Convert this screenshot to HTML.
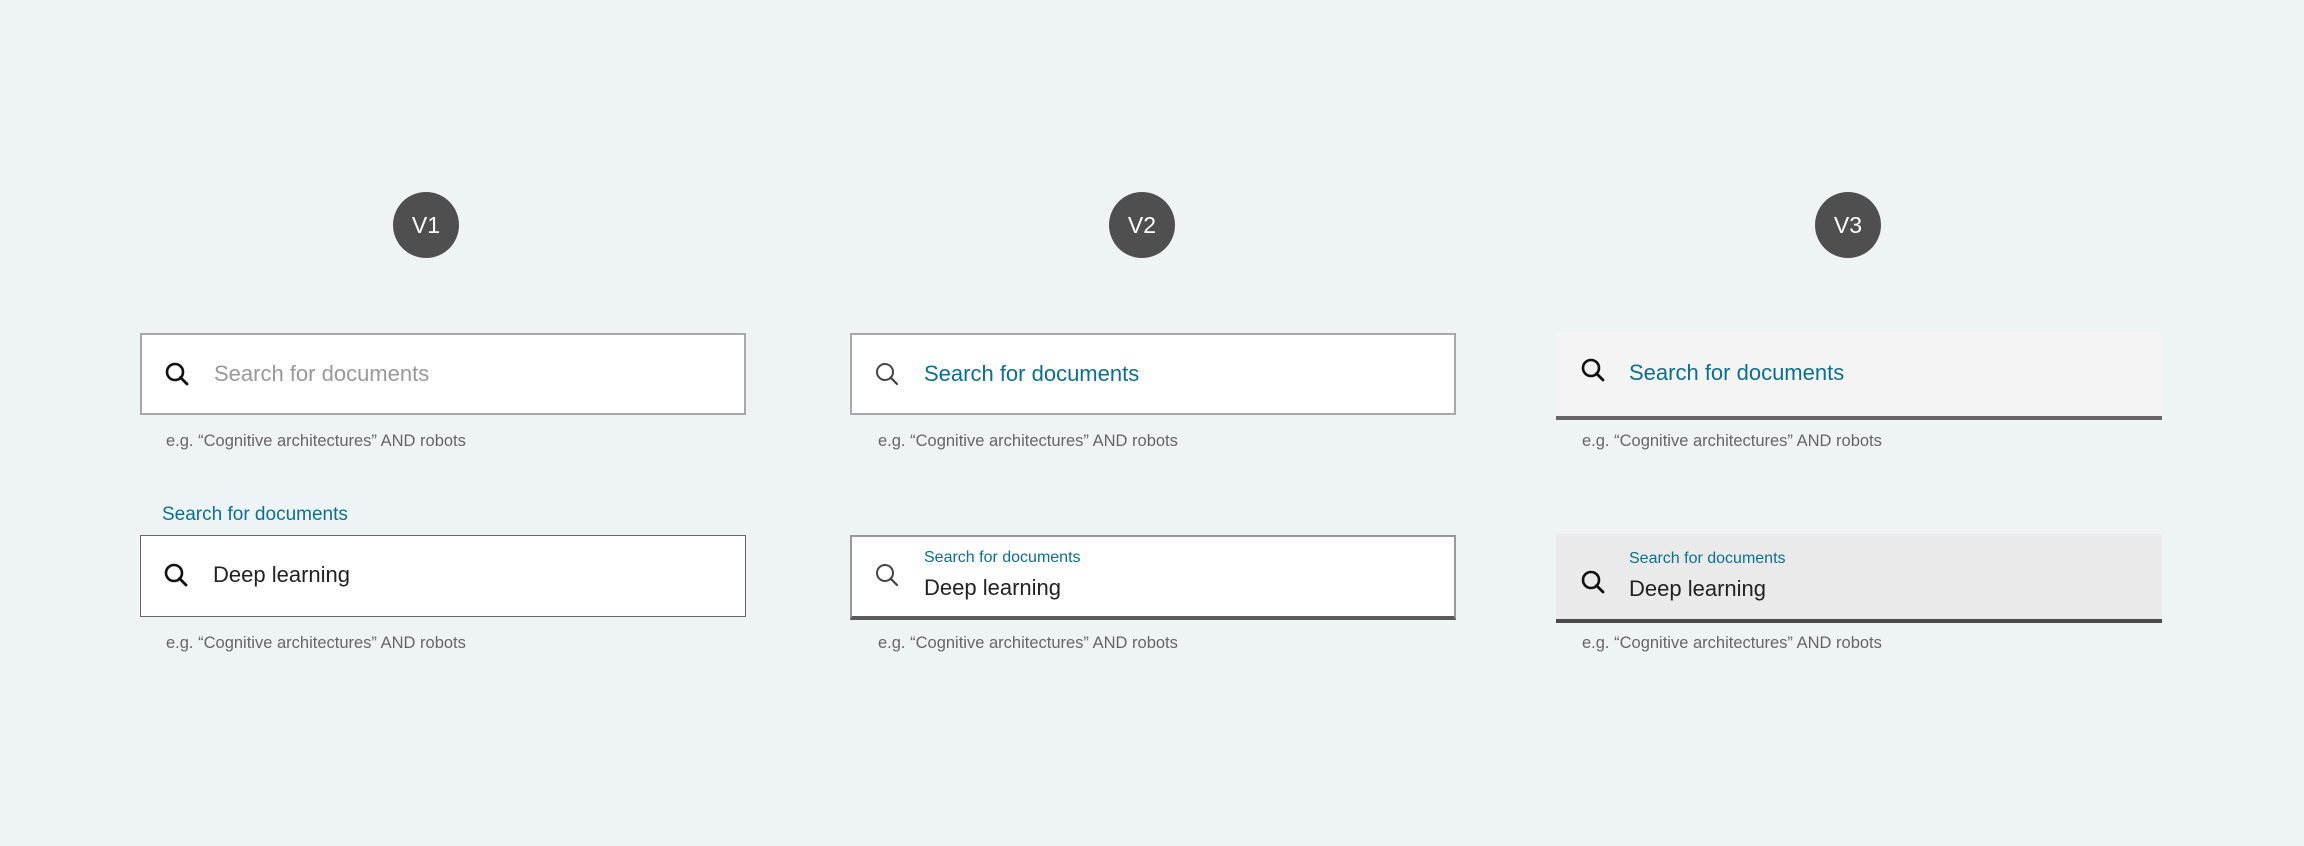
<!DOCTYPE html>
<html><head><meta charset="utf-8"><style>
html,body{margin:0;padding:0}
body{width:2304px;height:846px;background:#eef3f6;position:relative;overflow:hidden;font-family:"Liberation Sans",sans-serif}
.c{position:absolute;width:66px;height:66px;border-radius:50%;background:#4f4f4f;color:#fff;font-size:23px;line-height:66px;text-align:center;top:192px}
.box{position:absolute;box-sizing:border-box;width:606px;height:82px}
.ic{position:absolute;left:22px;width:28px;height:28px}
.t{position:absolute;left:72px;font-size:22px;white-space:nowrap}
.h{position:absolute;font-size:16.5px;color:#666;white-space:nowrap}
.teal{color:#0b7090}
.lbl{position:absolute;left:72px;font-size:16px;color:#0b7090;white-space:nowrap}
</style></head><body>
<div class="c" style="left:393px">V1</div>
<div class="c" style="left:1109px">V2</div>
<div class="c" style="left:1815px">V3</div>

<!-- V1 -->
<div class="box" style="left:140px;top:333px;background:#fff;border:2px solid #a8a8a8">
<svg class="ic" style="top:25px" viewBox="0 0 28 28"><circle cx="11" cy="12" r="8" fill="none" stroke="#111" stroke-width="2.6"/><path d="M16.5 17.5 L23 24" stroke="#111" stroke-width="2.8" stroke-linecap="round"/></svg>
<div class="t" style="top:26px;color:#999">Search for documents</div></div>
<div class="h" style="left:166px;top:432px">e.g. “Cognitive architectures” AND robots</div>
<div class="teal" style="position:absolute;left:162px;top:504px;font-size:19px">Search for documents</div>
<div class="box" style="left:140px;top:535px;background:#fff;border:1.5px solid #666">
<svg class="ic" style="top:25px" viewBox="0 0 28 28"><circle cx="11" cy="12" r="8" fill="none" stroke="#111" stroke-width="2.6"/><path d="M16.5 17.5 L23 24" stroke="#111" stroke-width="2.8" stroke-linecap="round"/></svg>
<div class="t" style="top:26px;color:#222">Deep learning</div></div>
<div class="h" style="left:166px;top:634px">e.g. “Cognitive architectures” AND robots</div>

<!-- V2 -->
<div class="box" style="left:850px;top:333px;background:#fff;border:2px solid #a8a8a8">
<svg class="ic" style="top:25px" viewBox="0 0 28 28"><circle cx="11" cy="12" r="8" fill="none" stroke="#444" stroke-width="2"/><path d="M16.5 17.5 L23 24" stroke="#444" stroke-width="2.2" stroke-linecap="round"/></svg>
<div class="t teal" style="top:26px">Search for documents</div></div>
<div class="h" style="left:878px;top:432px">e.g. “Cognitive architectures” AND robots</div>
<div class="box" style="left:850px;top:535px;height:85px;background:#fff;border:2px solid #999;border-bottom:4px solid #5a5a5a">
<svg class="ic" style="top:24px" viewBox="0 0 28 28"><circle cx="11" cy="12" r="8" fill="none" stroke="#444" stroke-width="2"/><path d="M16.5 17.5 L23 24" stroke="#444" stroke-width="2.2" stroke-linecap="round"/></svg>
<div class="lbl" style="top:12px">Search for documents</div>
<div class="t" style="top:38px;color:#222">Deep learning</div></div>
<div class="h" style="left:878px;top:634px">e.g. “Cognitive architectures” AND robots</div>

<!-- V3 -->
<div class="box" style="left:1556px;top:332px;height:88px;background:#f4f4f4;border-bottom:4px solid #666">
<svg class="ic" style="top:24px;left:24px" viewBox="0 0 28 28"><circle cx="11" cy="12" r="8" fill="none" stroke="#111" stroke-width="2.6"/><path d="M16.5 17.5 L23 24" stroke="#111" stroke-width="2.8" stroke-linecap="round"/></svg>
<div class="t teal" style="top:28px;left:73px">Search for documents</div></div>
<div class="h" style="left:1582px;top:432px">e.g. “Cognitive architectures” AND robots</div>
<div class="box" style="left:1556px;top:534px;height:89px;background:#eaeaea;border-bottom:4px solid #4a4a4a">
<svg class="ic" style="top:34px;left:24px" viewBox="0 0 28 28"><circle cx="11" cy="12" r="8" fill="none" stroke="#111" stroke-width="2.6"/><path d="M16.5 17.5 L23 24" stroke="#111" stroke-width="2.8" stroke-linecap="round"/></svg>
<div class="lbl" style="top:16px;left:73px">Search for documents</div>
<div class="t" style="top:42px;left:73px;color:#222">Deep learning</div></div>
<div class="h" style="left:1582px;top:634px">e.g. “Cognitive architectures” AND robots</div>
</body></html>
